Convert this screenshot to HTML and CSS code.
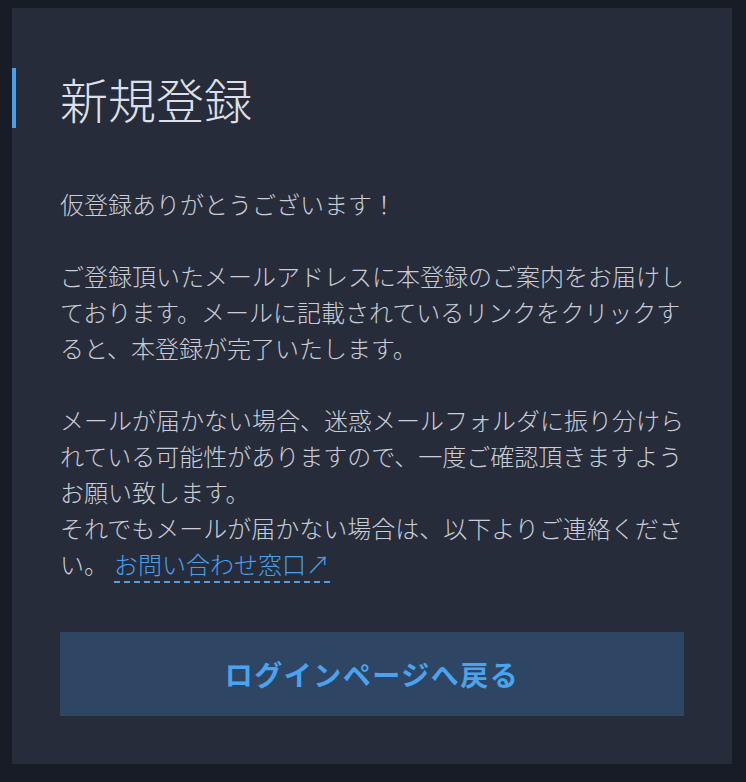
FILE: index.html
```html
<!DOCTYPE html>
<html lang="ja">
<head>
<meta charset="utf-8">
<title>新規登録</title>
<link rel="stylesheet" href="styles.css">
</head>
<body>
<main class="card">
  <h1 class="title">新規登録</h1>
  <p class="text">仮登録ありがとうございます！</p>
  <p class="text">ご登録頂いたメールアドレスに本登録のご案内をお届けしております。メールに記載されているリンクをクリックすると、本登録が完了いたします。</p>
  <p class="text">メールが届かない場合、迷惑メールフォルダに振り分けられている可能性がありますので、一度ご確認頂きますようお願い致します。<br>それでもメールが届かない場合は、以下よりご連絡ください。<a class="link" href="#">お問い合わせ窓口↗</a></p>
  <a class="button" href="#">ログインページへ戻る</a>
</main>
</body>
</html>
```
FILE: styles.css
```css
html {
  background: #181c26;
}
body {
  margin: 8px 14px 18px 12px;
  font-family: "Noto Sans CJK JP", "Noto Sans", sans-serif;
  color: #c9cdd6;
}
.card {
  background: #272c3b;
  padding: 60px 48px 48px;
  display: flex;
  flex-direction: column;
}
.title {
  margin: 0 0 0 -48px;
  padding-left: 44px;
  border-left: 4px solid #4aa0ea;
  font-size: 48px;
  line-height: 60px;
  font-weight: 300;
  color: #dde0e8;
}
.text {
  margin: 36px 0 0;
  font-size: 24px;
  line-height: 36px;
  font-weight: 300;
}
.title + .text {
  margin-top: 58px;
}
.link {
  color: #4aa0ea;
  text-decoration: none;
  border-bottom: 2px dashed #4aa0ea;
  margin-left: 6px;
}
.button {
  margin-top: 50px;
  height: 84px;
  display: flex;
  align-items: center;
  justify-content: center;
  background: #2e4664;
  color: #4aa3ef;
  font-size: 28px;
  font-weight: 700;
  letter-spacing: 1.5px;
  text-decoration: none;
}
```
